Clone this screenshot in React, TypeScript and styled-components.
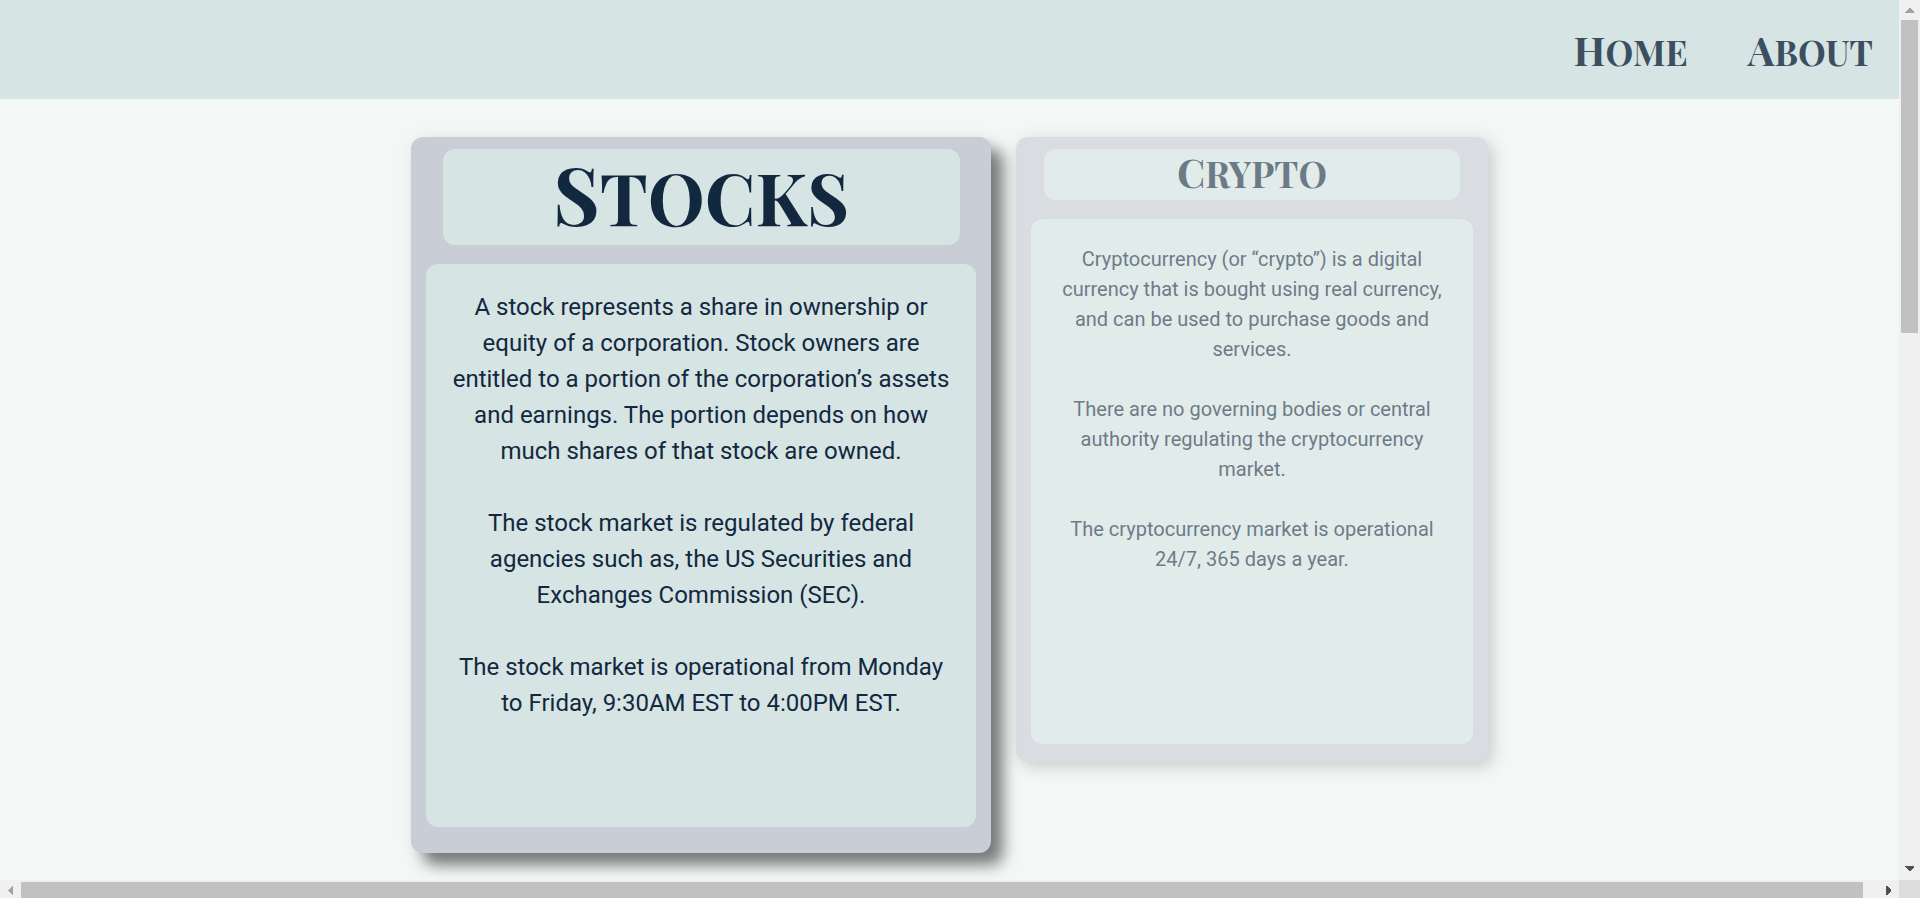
import React from "react";
import styled, { createGlobalStyle } from "styled-components";

const GlobalStyle = createGlobalStyle`
  * { box-sizing: border-box; }
  body { margin: 0; background: #f3f7f6; overflow: hidden; }
`;

const Frame = styled.div`
  display: grid;
  grid-template-columns: minmax(0, 1fr) 21px;
  grid-template-rows: minmax(0, 1fr) 18px;
  height: 100vh;
`;

const Page = styled.div`
  overflow: hidden;
  background: #f3f7f6;
  color: #12283f;
  font-family: Roboto, sans-serif;
`;

const Header = styled.header`
  background: #d6e4e3;
`;

const Nav = styled.nav`
  display: flex;
  justify-content: flex-end;
  align-items: center;
  gap: 60px;
  height: 99px;
  padding: 4px 26px 0;
`;

const NavLink = styled.a`
  display: block;
  color: #3b4f60;
  font: 700 35px/48px "Playfair Display SC", "Liberation Serif", serif;
  text-decoration: none;
  text-transform: uppercase;

  &::first-letter {
    font-size: 40px;
    line-height: 0;
  }
`;

const Cards = styled.main`
  display: flex;
  justify-content: center;
  align-items: flex-start;
  gap: 25px;
  padding: 38px 24px;
`;

const Card = styled.article<{ $active?: boolean }>`
  flex: 0 1 ${(p) => (p.$active ? 580 : 472)}px;
  display: flex;
  flex-direction: column;
  align-items: center;
  padding: ${(p) => (p.$active ? "12px 15px 26px" : "12px 15px 18px")};
  border-radius: 12px;
  background: #c9cdd6;
  opacity: ${(p) => (p.$active ? 1 : 0.6)};
  box-shadow: ${(p) =>
    p.$active
      ? "12px 12px 15px rgba(0, 0, 0, 0.5), 0 0 20px rgba(0, 0, 0, 0.05)"
      : "5px 5px 15px rgba(0, 0, 0, 0.25), 0 0 20px rgba(0, 0, 0, 0.05)"};
`;

const Title = styled.h2<{ $active?: boolean }>`
  width: 94%;
  margin: 0 0 19px;
  padding: ${(p) => (p.$active ? "3px 0 5px" : "0 0 3px")};
  border-radius: 12px;
  background: #d6e4e3;
  font: 700 ${(p) => (p.$active ? "72px/88px" : "36px/48px")} "Playfair Display SC", "Liberation Serif", serif;
  text-align: center;
  text-transform: uppercase;

  &::first-letter {
    font-size: ${(p) => (p.$active ? 80 : 40)}px;
    line-height: 0;
  }
`;

const Body = styled.div<{ $active?: boolean }>`
  width: 100%;
  min-height: ${(p) => (p.$active ? 563 : 525)}px;
  padding: 25px 24px;
  border-radius: 12px;
  background: #d6e4e3;
  font-size: ${(p) => (p.$active ? "24px" : "20px")};
  line-height: ${(p) => (p.$active ? "36px" : "30px")};
  text-align: center;
`;

const Paragraph = styled.p`
  margin: 0 0 1.5em;
`;

const VerticalBar = styled.div`
  display: flex;
  flex-direction: column;
  justify-content: space-between;
  align-items: center;
  padding: 8px 2px 9px;
  background: #f0f0f0;
`;

const HorizontalBar = styled.div`
  display: flex;
  justify-content: space-between;
  align-items: center;
  padding: 2px 8px 0;
  background: #f0f0f0;
`;

const VerticalThumb = styled.div`
  width: 17px;
  height: 313px;
  margin: 7px 0 auto;
  background: #c1c1c1;
`;

const HorizontalThumb = styled.div`
  flex: 1;
  height: 16px;
  margin: 0 23px 0 8px;
  background: #c1c1c1;
`;

const Corner = styled.div`
  background: #dcdcdc;
`;

const Arrow = styled.svg`
  display: block;
  flex: none;
`;

const stocks = [
  "A stock represents a share in ownership or equity of a corporation. Stock owners are entitled to a portion of the corporation’s assets and earnings. The portion depends on how much shares of that stock are owned.",
  "The stock market is regulated by federal agencies such as, the US Securities and Exchanges Commission (SEC).",
  "The stock market is operational from Monday to Friday, 9:30AM EST to 4:00PM EST.",
];

const crypto = [
  "Cryptocurrency (or “crypto”) is a digital currency that is bought using real currency, and can be used to purchase goods and services.",
  "There are no governing bodies or central authority regulating the cryptocurrency market.",
  "The cryptocurrency market is operational 24/7, 365 days a year.",
];

interface TopicProps {
  title: string;
  text: string[];
  active?: boolean;
}

function Topic({ title, text, active }: TopicProps) {
  return (
    <Card $active={active}>
      <Title $active={active}>{title}</Title>
      <Body $active={active}>
        {text.map((t) => (
          <Paragraph key={t}>{t}</Paragraph>
        ))}
      </Body>
    </Card>
  );
}

export default function App() {
  return (
    <>
      <GlobalStyle />
      <Frame>
        <Page>
          <Header>
            <Nav>
              <NavLink href="#home">Home</NavLink>
              <NavLink href="#about">About</NavLink>
            </Nav>
          </Header>
          <Cards>
            <Topic title="Stocks" text={stocks} active />
            <Topic title="Crypto" text={crypto} />
          </Cards>
        </Page>
        <VerticalBar aria-hidden="true">
          <Arrow width="9" height="5" shapeRendering="crispEdges">
            <path d="M4 0h1l4 4v1H0V4z" fill="#a3a3a3" />
          </Arrow>
          <VerticalThumb />
          <Arrow width="9" height="5" shapeRendering="crispEdges">
            <path d="M0 0h9v1L5 5H4L0 1z" fill="#505050" />
          </Arrow>
        </VerticalBar>
        <HorizontalBar aria-hidden="true">
          <Arrow width="5" height="9" shapeRendering="crispEdges">
            <path d="M0 4v1l4 4h1V0H4z" fill="#a3a3a3" />
          </Arrow>
          <HorizontalThumb />
          <Arrow width="5" height="9" shapeRendering="crispEdges">
            <path d="M5 4v1L1 9H0V0h1z" fill="#505050" />
          </Arrow>
        </HorizontalBar>
        <Corner />
      </Frame>
    </>
  );
}
